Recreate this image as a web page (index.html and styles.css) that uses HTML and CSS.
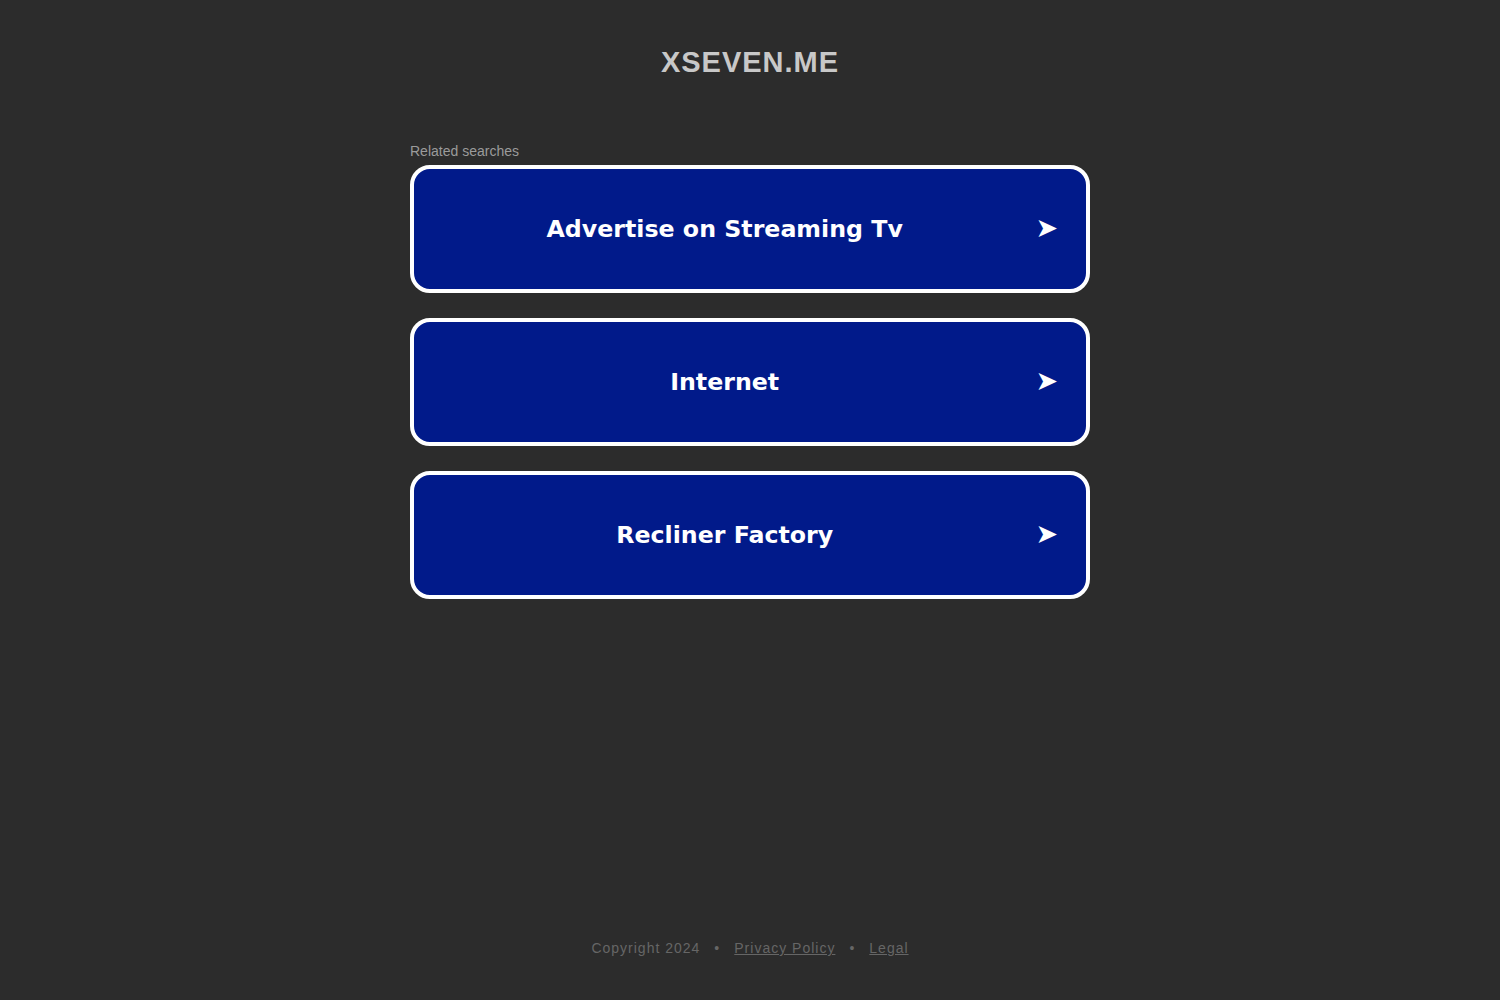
FILE: index.html
```html
<!DOCTYPE html>
<html>
<head>
<meta charset="utf-8">
<link rel="stylesheet" href="styles.css">
</head>
<body>
<div class="page">
  <header class="header">XSEVEN.ME</header>
  <main class="main">
    <div class="label">Related searches</div>
    <div class="list">
      <a class="item" href="#"><span class="item-text">Advertise on Streaming Tv</span><span class="arrow">&#10148;</span></a>
      <a class="item" href="#"><span class="item-text">Internet</span><span class="arrow">&#10148;</span></a>
      <a class="item" href="#"><span class="item-text">Recliner Factory</span><span class="arrow">&#10148;</span></a>
    </div>
  </main>
  <footer class="footer">
    <span>Copyright 2024</span><span class="dot">•</span><a href="#">Privacy Policy</a><span class="dot">•</span><a href="#">Legal</a>
  </footer>
</div>
</body>
</html>
```
FILE: styles.css
```css
html, body {
  margin: 0;
  padding: 0;
  background: #2c2c2c;
  height: 100%;
}
.page {
  height: 1000px;
  display: flex;
  flex-direction: column;
  align-items: center;
  font-family: "Liberation Sans", Arial, sans-serif;
}
.header {
  margin-top: 45px;
  font-size: 29px;
  font-weight: bold;
  letter-spacing: 1px;
  color: #c8c8c8;
  line-height: 34px;
}
.main {
  width: 680px;
  margin-top: 64px;
}
.label {
  font-size: 14px;
  color: #9b9b9b;
  line-height: 16px;
  margin-bottom: 6px;
}
.list {
  display: flex;
  flex-direction: column;
  gap: 25px;
}
.item {
  box-sizing: border-box;
  height: 128px;
  border: 4px solid #ffffff;
  border-radius: 20px;
  background: #011a8a;
  display: flex;
  align-items: center;
  text-decoration: none;
  color: #fff;
  padding: 0 28px 0 0;
}
.item-text {
  flex: 1;
  text-align: center;
  font-family: "DejaVu Sans", Verdana, sans-serif;
  font-weight: bold;
  font-size: 23.7px;
}
.arrow {
  font-family: "DejaVu Sans", sans-serif;
  font-size: 27px;
  line-height: 1;
  color: #fff;
  margin-bottom: 3px;
}
.footer {
  margin-top: auto;
  margin-bottom: 44px;
  font-size: 14px;
  letter-spacing: 1px;
  color: #666;
  display: flex;
  align-items: center;
}
.footer a {
  color: #666;
  text-decoration: underline;
}
.dot {
  margin: 0 14px;
}
```
